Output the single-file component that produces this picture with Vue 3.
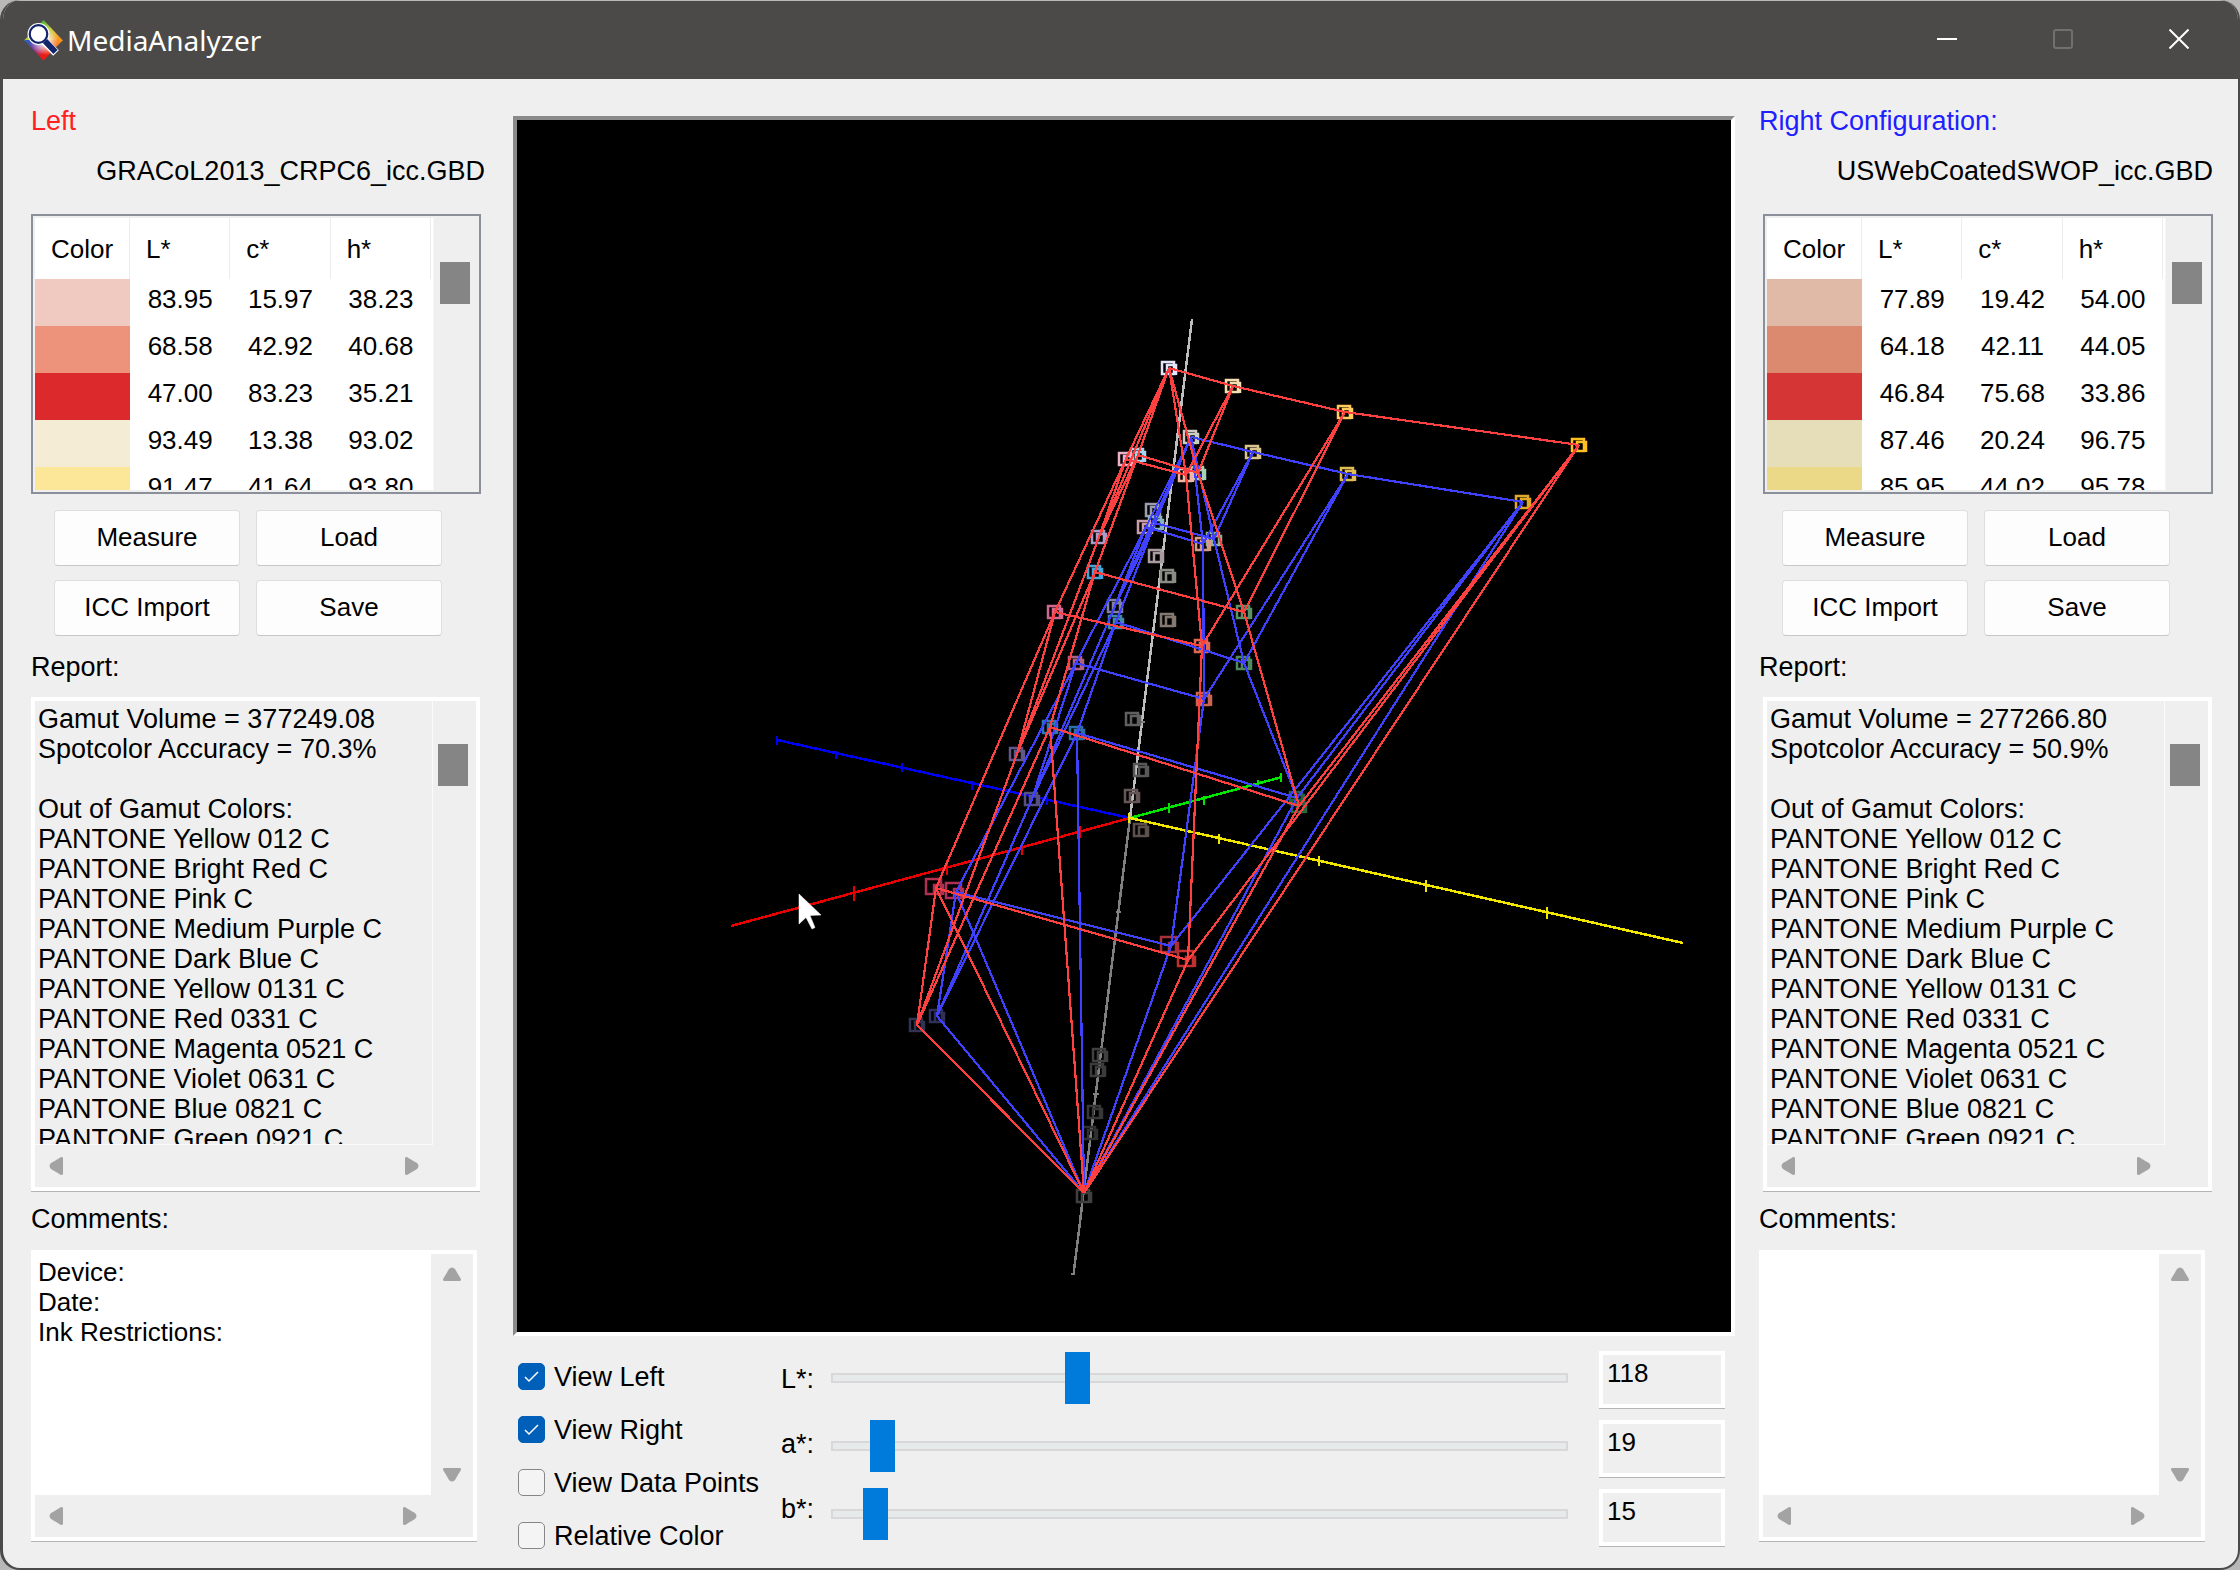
<template>
  <div class="window">
    <header class="titlebar">
      <svg class="app-icon" viewBox="0 0 39 41" aria-hidden="true">
        <defs>
          <radialGradient id="fade">
            <stop offset="0" stop-color="#fff" />
            <stop offset="0.3" stop-color="#fff" stop-opacity="0.8" />
            <stop offset="1" stop-color="#fff" stop-opacity="0" />
          </radialGradient>
          <linearGradient id="green-orange" x1="0" y1="0" x2="1" y2="1">
            <stop offset="0.2" stop-color="#2fa836" />
            <stop offset="0.55" stop-color="#c8d43c" />
            <stop offset="0.9" stop-color="#f7931e" />
          </linearGradient>
          <linearGradient id="blue-red" x1="0" y1="0" x2="1" y2="1">
            <stop offset="0.1" stop-color="#2a5cc0" />
            <stop offset="0.5" stop-color="#8a3a98" />
            <stop offset="0.85" stop-color="#ee1c14" />
          </linearGradient>
          <linearGradient id="orange-red" x1="1" y1="0" x2="0" y2="1">
            <stop offset="0.1" stop-color="#f7931e" />
            <stop offset="0.8" stop-color="#ee1c14" />
          </linearGradient>
        </defs>
        <path d="M19.500 0 L39 20.500 L19.500 20.500 L0 20.500 Z" fill="url(#green-orange)" />
        <path d="M39 20 L19.500 40.500 L19.500 20 Z" fill="url(#orange-red)" />
        <path d="M0 20 L19.500 40.500 L20 20 Z" fill="url(#blue-red)" />
        <circle cx="20.500" cy="21" r="14" fill="url(#fade)" />
        <path d="M20 21 L32 33" stroke="#fff" stroke-width="8" />
        <circle cx="14.500" cy="14" r="11" fill="#fff" />
        <path d="M21 21 L31.500 32" stroke="#12256b" stroke-width="6" />
        <circle cx="14.500" cy="14" r="8.800" fill="#fff" stroke="#12256b" stroke-width="2.200" />
      </svg>
      <h1 class="title">MediaAnalyzer</h1>
      <div class="window-buttons">
        <button type="button" aria-label="Minimize">
          <svg viewBox="0 0 20 20"><path d="M0 10 H20" stroke="#fff" stroke-width="2" /></svg>
        </button>
        <button type="button" aria-label="Maximize" disabled>
          <svg viewBox="0 0 20 20"><rect x="1" y="1" width="18" height="18" rx="2" fill="none" stroke="#71706e" stroke-width="2" /></svg>
        </button>
        <button type="button" aria-label="Close">
          <svg viewBox="0 0 20 20"><path d="M0.500 0.500 L19.500 19.500 M19.500 0.500 L0.500 19.500" stroke="#fff" stroke-width="2" /></svg>
        </button>
      </div>
    </header>

    <div class="body">
      <section v-for="panel in panels" :key="panel.id" class="panel" :class="panel.id">
        <h2 class="panel-title">{{ panel.title }}</h2>
        <p class="file-name">{{ panel.file }}</p>

        <div class="color-list">
          <div class="table-clip">
            <table>
              <thead>
                <tr>
                  <th class="swatch-col">Color</th>
                  <th>L*</th>
                  <th>c*</th>
                  <th>h*</th>
                </tr>
              </thead>
              <tbody>
                <tr v-for="row in panel.colors" :key="row.swatch">
                  <td :style="{ backgroundColor: row.swatch }"></td>
                  <td v-for="value in row.lch" :key="value">{{ value }}</td>
                </tr>
              </tbody>
            </table>
          </div>
          <div class="v-scroll"><div class="thumb list-thumb"></div></div>
        </div>

        <div class="actions">
          <button v-for="action in actions" :key="action" type="button">{{ action }}</button>
        </div>

        <label class="caption report-caption" :for="panel.id + '-report'">Report:</label>
        <div class="memo report">
          <textarea :id="panel.id + '-report'" readonly wrap="off" :value="panel.report"></textarea>
          <div class="v-scroll"><div class="thumb report-thumb"></div></div>
          <div class="h-scroll">
            <button type="button" aria-label="Scroll left"><svg viewBox="0 0 14 18"><path :d="arrowLeft" /></svg></button>
            <button type="button" aria-label="Scroll right"><svg viewBox="0 0 14 18"><path :d="arrowRight" /></svg></button>
          </div>
        </div>

        <label class="caption comments-caption" :for="panel.id + '-comments'">Comments:</label>
        <div class="memo comments">
          <textarea :id="panel.id + '-comments'" wrap="off" v-model="panel.comments"></textarea>
          <div class="v-scroll arrows">
            <button type="button" aria-label="Scroll up"><svg viewBox="0 0 18 14"><path :d="arrowUp" /></svg></button>
            <button type="button" aria-label="Scroll down"><svg viewBox="0 0 18 14"><path :d="arrowDown" /></svg></button>
          </div>
          <div class="h-scroll">
            <button type="button" aria-label="Scroll left"><svg viewBox="0 0 14 18"><path :d="arrowLeft" /></svg></button>
            <button type="button" aria-label="Scroll right"><svg viewBox="0 0 14 18"><path :d="arrowRight" /></svg></button>
          </div>
        </div>
      </section>

      <main class="viewer">
        <div class="canvas">
          <svg viewBox="517 120 1214 1212" role="img" aria-label="Gamut plot">
            <!-- axes -->
            <g fill="none" stroke-width="2.500" shape-rendering="crispEdges">
              <path d="M1192 319 L1130 818" stroke="#bebebe" />
              <path d="M1130 818 L1074 1270 v4 h-3 M1139 722 h6 M1116 912 h5 M1093 1094 h6" stroke="#808080" />
              <path d="M777 740 L1130 818 M777 736 v9 M836 751 v8 M902 763 v9 M972 781 v9 M1047 796 v9" stroke="#0000f0" />
              <path d="M731 926 L1130 818 M854 886 v15 M947 860 v15 M1022 843 v12 M1080 826 v12" stroke="#e60000" />
              <path d="M1130 818 L1282 777 M1169 803 v10 M1204 796 v9 M1258 780 v6 M1281 773 v9" stroke="#00e600" />
              <path d="M1130 818 L1683 943 M1129 813 v10 M1219 834 v10 M1319 856 v10 M1426 880 v12 M1547 907 v12" stroke="#f0e600" />
            </g>

            <!-- sample markers -->
            <g fill="none" stroke-width="2.500">
              <path v-for="(m, i) in markers" :key="i" :d="markerPath(m)" :stroke="m[2]" />
            </g>

            <!-- gamut hulls -->
            <g fill="none" stroke-width="2.200" shape-rendering="crispEdges">
              <path v-if="view.right" :d="hullPath(hulls.right)" stroke="#4040ff" />
              <path v-if="view.left" :d="hullPath(hulls.left)" stroke="#ff4040" />
            </g>

            <path d="M799 894 V924 L806 917.500 L812 929 L815 927.500 L810 915.500 L821 915 Z" fill="#fff" stroke="#fff" stroke-width="0.500" />
          </svg>
        </div>

        <div class="controls">
          <div class="checks">
            <label v-for="option in options" :key="option.key">
              <input type="checkbox" v-model="view[option.key]" />
              {{ option.label }}
            </label>
          </div>
          <div class="axis-labels">
            <label v-for="axis in axes" :key="axis.id" :for="axis.id">{{ axis.label }}</label>
          </div>
          <div class="sliders">
            <div v-for="axis in axes" :key="axis.id">
              <input :id="axis.id" type="range" min="0" max="360" v-model.number="axis.value" />
            </div>
          </div>
          <div class="fields">
            <input
              v-for="axis in axes"
              :key="axis.id"
              type="text"
              :aria-label="axis.label"
              v-model.number="axis.value"
            />
          </div>
        </div>
      </main>
    </div>
  </div>
</template>

<script setup>
import { reactive } from 'vue';

const actions = ['Measure', 'Load', 'ICC Import', 'Save'];

// same spot colors are out of gamut in both configurations
const outOfGamut = [
  'Yellow 012',
  'Bright Red',
  'Pink',
  'Medium Purple',
  'Dark Blue',
  'Yellow 0131',
  'Red 0331',
  'Magenta 0521',
  'Violet 0631',
  'Blue 0821',
  'Green 0921',
];

function buildReport(volume, accuracy) {
  return [
    `Gamut Volume = ${volume}`,
    `Spotcolor Accuracy = ${accuracy}%`,
    '',
    'Out of Gamut Colors:',
    ...outOfGamut.map((name) => `PANTONE ${name} C`),
  ].join('\n');
}

const panels = reactive([
  {
    id: 'left',
    title: 'Left',
    file: 'GRACoL2013_CRPC6_icc.GBD',
    colors: [
      { swatch: '#f0cac1', lch: ['83.95', '15.97', '38.23'] },
      { swatch: '#ed937c', lch: ['68.58', '42.92', '40.68'] },
      { swatch: '#dc292b', lch: ['47.00', '83.23', '35.21'] },
      { swatch: '#f4ecd5', lch: ['93.49', '13.38', '93.02'] },
      { swatch: '#fce698', lch: ['91.47', '41.64', '93.80'] },
    ],
    report: buildReport('377249.08', '70.3'),
    comments: 'Device:\nDate:\nInk Restrictions:',
  },
  {
    id: 'right',
    title: 'Right Configuration:',
    file: 'USWebCoatedSWOP_icc.GBD',
    colors: [
      { swatch: '#e1b9a7', lch: ['77.89', '19.42', '54.00'] },
      { swatch: '#db8a6f', lch: ['64.18', '42.11', '44.05'] },
      { swatch: '#d53635', lch: ['46.84', '75.68', '33.86'] },
      { swatch: '#e6ddb9', lch: ['87.46', '20.24', '96.75'] },
      { swatch: '#ebd988', lch: ['85.95', '44.02', '95.78'] },
    ],
    report: buildReport('277266.80', '50.9'),
    comments: '',
  },
]);

const view = reactive({ left: true, right: true, points: false, relative: false });

const options = [
  { key: 'left', label: 'View Left' },
  { key: 'right', label: 'View Right' },
  { key: 'points', label: 'View Data Points' },
  { key: 'relative', label: 'Relative Color' },
];

const axes = reactive([
  { id: 'axis-l', label: 'L*:', value: 118 },
  { id: 'axis-a', label: 'a*:', value: 19 },
  { id: 'axis-b', label: 'b*:', value: 15 },
]);

// projected hull vertices
const hulls = {
  left: {
    white: [1169, 368], y1: [1233, 386], y2: [1345, 412], y3: [1579, 445],
    c1: [1138, 455], m1: [1126, 459], r1: [1186, 475], g1: [1198, 473],
    b1: [1099, 537], c2: [1095, 572], m2: [1055, 612], g2: [1244, 612],
    r2: [1202, 646], b2: [1017, 754], c3: [1050, 727], m3: [936, 888],
    r3: [1188, 960], g3: [1299, 806], b3: [917, 1025], black: [1084, 1193],
  },
  right: {
    white: [1191, 437], y1: [1253, 452], y2: [1348, 474], y3: [1523, 502],
    c1: [1155, 523], m1: [1146, 527], r1: [1203, 544], g1: [1214, 539],
    b1: [1115, 606], c2: [1116, 622], m2: [1076, 663], g2: [1244, 663],
    r2: [1204, 699], b2: [1032, 799], c3: [1077, 733], m3: [956, 892],
    r3: [1171, 946], g3: [1297, 798], b3: [937, 1016], black: [1084, 1193],
  },
};

const edges = [
  'white y1', 'y1 y2', 'y2 y3',
  'white c1', 'white m1', 'white b1', 'white r1', 'white g1',
  'c1 g1', 'm1 r1', 'y1 r1', 'y1 g1',
  'm1 m2', 'm1 b1', 'c1 b1', 'c1 c2', 'r1 r2', 'g1 g2',
  'y2 r2', 'y2 g2', 'c2 g2', 'm2 r2',
  'b1 b2', 'm2 b2', 'c2 b2', 'c2 c3', 'm2 m3', 'r2 r3', 'g2 g3',
  'y3 r3', 'y3 g3', 'y3 black', 'c3 g3', 'm3 r3',
  'b2 b3', 'c3 b3', 'm3 b3',
  'b3 black', 'm3 black', 'c3 black', 'r3 black', 'g3 black',
].map((edge) => edge.split(' '));

function hullPath(points) {
  return edges.map(([a, b]) => `M${points[a]} L${points[b]}`).join(' ');
}

const markers = [
  [1169, 368, '#e4e4fa'], [1233, 386, '#f5dfb0'], [1345, 412, '#ffcc5c'], [1579, 445, '#ffc020'],
  [1138, 455, '#a4d4ee'], [1126, 459, '#eeb0c8'], [1198, 473, '#a8d0b8'], [1186, 475, '#f2b4a4'],
  [1099, 537, '#a89cc8'], [1095, 572, '#44a4d8'], [1055, 612, '#d06890'], [1244, 612, '#589468'],
  [1202, 646, '#e06850'], [1017, 754, '#605888'], [1050, 727, '#2c78b0'], [936, 888, '#b03050', 3],
  [1188, 960, '#c03030', 3], [1299, 806, '#286840'], [917, 1025, '#303450'], [1084, 1196, '#404040'],
  [1191, 437, '#ccccc4'], [1253, 452, '#d8c48c'], [1348, 474, '#e0bc54'], [1523, 502, '#e0a828'],
  [1153, 510, '#9c9cb0'], [1156, 523, '#88b4c0'], [1145, 527, '#c89ca8'], [1214, 539, '#90b098'],
  [1203, 544, '#d49c84'], [1115, 606, '#8080a0'], [1116, 622, '#4088a8'], [1076, 663, '#b06080'],
  [1244, 663, '#508860'], [1204, 699, '#c86450'], [1032, 799, '#545080'], [1077, 733, '#2c70a8'],
  [956, 892, '#b03058', 3], [1171, 946, '#a83038', 3], [1297, 798, '#286048'], [937, 1016, '#303058'],
  [1156, 556, '#a89ca0'], [1168, 576, '#8c8c84'], [1168, 620, '#847870'], [1133, 719, '#606060'],
  [1141, 770, '#585858'], [1132, 796, '#645654'], [1141, 830, '#5c504c'], [1100, 1055, '#404040'],
  [1098, 1070, '#3c3c3c'], [1095, 1112, '#383838'], [1090, 1133, '#303030'],
];

// small wire box around a sample, grow widens it for the saturated corners
function markerPath([x, y, , grow = 0]) {
  const s = 12 + grow;
  return `M${x - 7 - grow} ${y - 6 - grow} h${s} v${s} h${-s} Z M${x - 2} ${y + 6} v-9 h9 v10`;
}

const arrowLeft = 'M14 1 V17 Q14 18 12 18 Q9 16 2 12 Q-1 9 2 6 Q9 2 12 0 Q14 0 14 1 Z';
const arrowRight = 'M0 1 V17 Q0 18 2 18 Q5 16 12 12 Q15 9 12 6 Q5 2 2 0 Q0 0 0 1 Z';
const arrowUp = 'M1 14 H17 Q18 14 18 12 Q16 9 12 2 Q9 -1 6 2 Q2 9 0 12 Q0 14 1 14 Z';
const arrowDown = 'M1 0 H17 Q18 0 18 2 Q16 5 12 12 Q9 15 6 12 Q2 5 0 2 Q0 0 1 0 Z';
</script>

<style>
body {
  margin: 0;
  background-color: #b8b8b8;
}
</style>

<style scoped>
.window {
  box-sizing: border-box;
  min-height: 100vh;
  display: flex;
  flex-direction: column;
  overflow: hidden;
  border: solid #4b4a48;
  border-width: 0 2px 2px 3px;
  border-radius: 20px;
  background-color: #efefef;
  font-family: "Liberation Sans", Arial, sans-serif;
  font-size: 27px;
  line-height: 30px;
  color: #000;
}

button,
input,
textarea {
  font: inherit;
  color: inherit;
  box-sizing: border-box;
}

/* title bar */
.titlebar {
  display: flex;
  align-items: center;
  height: 78px;
  margin: 0 -3px;
  padding-left: 24px;
  border-top: 1px solid #b8b8b8;
  background-color: #4b4a48;
  color: #fff;
}

.app-icon {
  width: 39px;
  height: 41px;
}

.title {
  margin: 0 auto 0 4px;
  font-family: "Noto Sans", sans-serif;
  font-size: 28px;
  font-weight: 400;
  line-height: 40px;
}

.window-buttons {
  display: flex;
  height: 100%;
  padding-right: 4px;
}

.window-buttons button {
  width: 116px;
  padding: 0;
  border: none;
  background: none;
}

.window-buttons svg {
  width: 20px;
  height: 20px;
}

/* layout */
.body {
  flex: 1;
  display: grid;
  grid-template-columns: 454px minmax(0, 1fr) 454px;
  padding: 27px 25px 0 28px;
}

.panel {
  grid-row: 1;
  display: flex;
  flex-direction: column;
  padding-bottom: 26px;
}

.left {
  grid-column: 1;
}

.right {
  grid-column: 3;
}

.viewer {
  grid-row: 1;
  grid-column: 2;
  margin: 10px 24px 0 28px;
}

.panel-title {
  margin: 0 0 20px;
  font-size: 27px;
  font-weight: 400;
}

.left .panel-title {
  color: #ff2020;
}

.right .panel-title {
  color: #2020ff;
}

.file-name {
  margin: 0 0 28px;
  text-align: right;
}

/* color table */
.color-list {
  display: flex;
  box-sizing: border-box;
  width: 450px;
  height: 280px;
  padding: 2px;
  border: 2px solid #8a8f9a;
}

.right .color-list,
.right .report {
  margin-left: 4px;
}

.table-clip {
  flex: 1;
  overflow: hidden;
  background-color: #fff;
  border-right: 1px solid #f5f5f5;
}

table {
  width: 396px;
  table-layout: fixed;
  border-collapse: collapse;
  font-size: 26px;
}

th {
  height: 61px;
  padding: 0 0 0 16px;
  box-sizing: border-box;
  font-weight: 400;
  text-align: left;
  box-shadow: inset -1px 0 #ececec;
}

.swatch-col {
  width: 95px;
}

td {
  padding: 0 0 7px;
  line-height: 40px;
  text-align: center;
}

.v-scroll {
  display: flex;
  flex-direction: column;
  align-items: center;
  box-sizing: border-box;
}

.color-list .v-scroll {
  width: 43px;
  padding-right: 2px;
}

.report .v-scroll {
  padding-right: 4px;
}

.thumb {
  width: 30px;
  height: 42px;
  background-color: #858585;
}

.list-thumb {
  margin-top: 44px;
}

.report-thumb {
  margin-top: 43px;
}

/* buttons */
.actions {
  display: grid;
  grid-template-columns: 186px 186px;
  gap: 14px 16px;
  margin: 16px 0 16px 23px;
}

.actions button {
  height: 56px;
  padding: 0 0 2px;
  border: 1px solid #dedede;
  border-bottom-color: #c8c8c8;
  border-radius: 4px;
  background-color: #fdfdfd;
  font-size: 26px;
}

/* memo boxes */
.caption {
  align-self: flex-start;
}

.memo {
  display: grid;
  box-sizing: border-box;
  border: 4px solid #fff;
  box-shadow: 0 1px #b4b4b4;
}

.memo textarea {
  display: block;
  width: 100%;
  height: 100%;
  padding: 3px 3px 0;
  border: none;
  border-radius: 0;
  outline: none;
  resize: none;
  overflow: hidden;
}

.report {
  grid-template-columns: minmax(0, 1fr) 43px;
  grid-template-rows: minmax(0, 1fr) 42px;
  width: 449px;
  height: 494px;
  margin-top: 15px;
}

.report textarea {
  border: solid #fbfbfb;
  border-width: 0 1px 1px 0;
  background-color: #efefef;
}

.comments-caption {
  margin-top: 13px;
}

.comments {
  grid-template-columns: minmax(0, 1fr) 42px;
  grid-template-rows: minmax(0, 1fr) 42px;
  width: 446px;
  height: 291px;
  margin-top: 16px;
}

.comments textarea {
  background-color: #fff;
  font-size: 26px;
}

.comments .v-scroll,
.comments .h-scroll {
  background-color: #efefef;
}

.v-scroll.arrows {
  justify-content: space-between;
  padding: 13px 0;
}

.h-scroll {
  display: flex;
  justify-content: space-between;
  align-items: center;
  padding: 0 14px;
}

.comments .h-scroll {
  grid-column: 1 / -1;
  padding-right: 56px;
}

.v-scroll button,
.h-scroll button {
  display: flex;
  padding: 0;
  border: none;
  background: none;
}

.h-scroll svg {
  width: 14px;
  height: 18px;
}

.v-scroll svg {
  width: 18px;
  height: 14px;
}

.h-scroll path,
.v-scroll path {
  fill: #a3a3a3;
}

/* 3D view */
.canvas {
  border: 4px solid;
  border-color: #8a8a8a #fff #fff #8a8a8a;
  background-color: #000;
}

.canvas svg {
  display: block;
  width: 100%;
}

/* controls under the view */
.controls {
  display: flex;
  padding: 8px 10px 0 5px;
}

.checks {
  width: 263px;
  padding-top: 6px;
}

.checks label {
  display: flex;
  align-items: center;
  gap: 9px;
  height: 53px;
  white-space: nowrap;
}

.checks input {
  appearance: none;
  width: 27px;
  height: 27px;
  margin: 0;
  border: 1px solid #868686;
  border-radius: 5px;
  background-color: #f4f4f4;
}

.checks input:checked {
  border-color: #005fb8;
  background: #005fb8 url("data:image/svg+xml,%3Csvg xmlns='http://www.w3.org/2000/svg' viewBox='0 0 27 27'%3E%3Cpath d='M7 14 L11 18 L20 9' fill='none' stroke='white' stroke-width='1.500'/%3E%3C/svg%3E") center / 27px 27px no-repeat;
}

.axis-labels {
  width: 50px;
  padding-top: 3px;
}

.axis-labels label {
  display: block;
  line-height: 65px;
}

.sliders {
  flex: 1;
  margin-right: 31px;
}

.sliders div {
  display: flex;
  align-items: center;
  height: 68px;
}

.sliders input {
  appearance: none;
  width: 100%;
  height: 52px;
  margin: 0;
  background: transparent;
}

.sliders input::-webkit-slider-runnable-track {
  height: 10px;
  box-sizing: border-box;
  border: 2px solid #d8d8d8;
  background-color: #e6eaea;
}

.sliders input::-webkit-slider-thumb {
  appearance: none;
  width: 25px;
  height: 52px;
  margin-top: -23px;
  background-color: #007bdc;
}

.fields {
  display: flex;
  flex-direction: column;
  gap: 12px;
  width: 126px;
  padding-top: 7px;
}

.fields input {
  width: 100%;
  height: 57px;
  padding: 3px 4px 16px;
  border: 4px solid #fff;
  border-radius: 0;
  background-color: #efefef;
  box-shadow: 0 1px #b4b4b4;
  font-size: 26px;
}
</style>
